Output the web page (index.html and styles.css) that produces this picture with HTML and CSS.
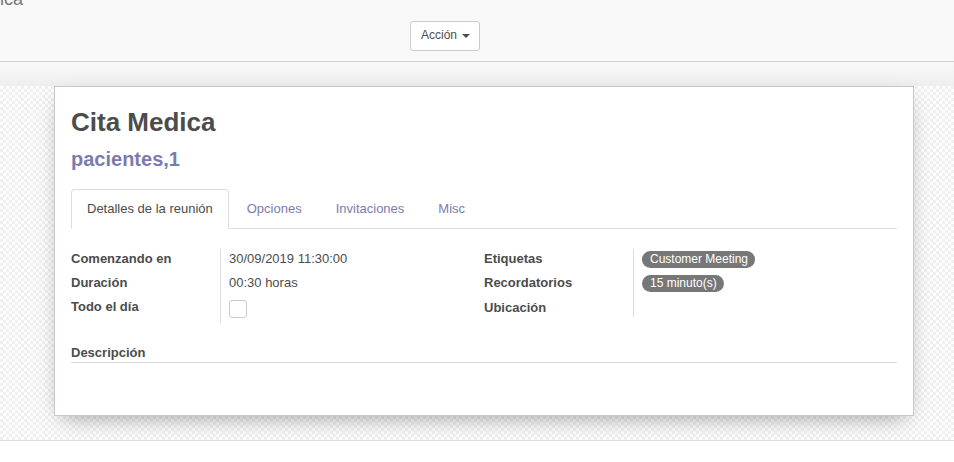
FILE: index.html
```html
<!DOCTYPE html>
<html lang="es">
<head>
<meta charset="utf-8">
<title>Cita Medica</title>
<link rel="stylesheet" href="styles.css">
</head>
<body>
<div class="cp">
  <div class="breadcrumb">Cita Medica</div>
  <div class="cp-row">
    <button class="btn" type="button">Acción <span class="caret"></span></button>
  </div>
</div>
<div class="sheet-bg">
  <div class="sheet">
    <h1 class="title">Cita Medica</h1>
    <h2 class="subtitle">pacientes,1</h2>
    <ul class="tabs">
      <li class="tab active">Detalles de la reunión</li>
      <li class="tab">Opciones</li>
      <li class="tab">Invitaciones</li>
      <li class="tab">Misc</li>
    </ul>
    <div class="groups">
      <div class="group">
        <div class="lbl">Comenzando en</div><div class="val">30/09/2019 11:30:00</div>
        <div class="lbl">Duración</div><div class="val">00:30 horas</div>
        <div class="lbl last">Todo el día</div><div class="val last"><span class="checkbox"></span></div>
      </div>
      <div class="group">
        <div class="lbl">Etiquetas</div><div class="val tags"><span class="badge">Customer Meeting</span></div>
        <div class="lbl">Recordatorios</div><div class="val tags"><span class="badge">15 minuto(s)</span></div>
        <div class="lbl last loc">Ubicación</div><div class="val last"></div>
      </div>
    </div>
    <div class="desc-label">Descripción</div>
    <div class="desc-body"></div>
  </div>
</div>
<div class="chatter"></div>
</body>
</html>
```
FILE: styles.css
```css
* { box-sizing: border-box; }
html, body { margin: 0; padding: 0; }
body {
  font-family: "Liberation Sans", Arial, sans-serif;
  font-size: 13px;
  color: #4c4c4c;
  background: #fff;
  overflow: hidden;
  height: 462px;
}

.cp {
  display: flow-root;
  height: 62px;
  background: #f9f9f9;
  border-bottom: 1px solid #cfcfcf;
}
.breadcrumb {
  font-size: 18px;
  line-height: 20px;
  color: #777;
  margin: -11px 0 0 -72px;
  white-space: nowrap;
}
.cp-row {
  display: flex;
  padding-left: 410px;
  margin-top: 12px;
}
.btn {
  font-family: "Liberation Sans", Arial, sans-serif;
  font-size: 12px;
  line-height: 16px;
  color: #4c4c4c;
  background: #fff;
  border: 1px solid #ccc;
  border-radius: 3px;
  height: 30px;
  width: 70px;
  padding: 5px 10px 7px;
  display: flex;
  align-items: center;
  gap: 5px;
  cursor: pointer;
}
.caret {
  display: inline-block;
  width: 0;
  height: 0;
  border-top: 4px solid #4c4c4c;
  border-left: 4px solid transparent;
  border-right: 4px solid transparent;
  margin-top: 2px;
}

.sheet-bg {
  padding: 24px 40px 24px 54px;
  background:
    linear-gradient(#f9f9f9, #eeeeee) 0 0 / 100% 24px no-repeat,
    repeating-conic-gradient(#f0f0f0 0 25%, #fdfdfd 0 50%) 0 0 / 6px 6px;
}
.sheet {
  width: 860px;
  background: #fff;
  border: 1px solid #c9c8d2;
  box-shadow: 0 8px 22px -8px rgba(0,0,0,0.4);
  padding: 20px 16px 16px;
}
.title {
  margin: 0;
  font-size: 26px;
  line-height: 30px;
  font-weight: bold;
  color: #4c4c4c;
}
.subtitle {
  margin: 10px 0 0;
  font-size: 20px;
  line-height: 24px;
  font-weight: bold;
  color: #7c7bad;
}
.tabs {
  list-style: none;
  margin: 18px 0 0;
  padding: 0;
  display: flex;
  border-bottom: 1px solid #ddd;
}
.tab {
  margin: 0 2px -1px 0;
  padding: 10px 15px;
  line-height: 18px;
  border: 1px solid transparent;
  border-radius: 4px 4px 0 0;
  color: #7c7bad;
  cursor: pointer;
}
.tab.active {
  color: #4c4c4c;
  background: #fff;
  border-color: #ddd #ddd transparent;
}

.groups {
  display: grid;
  grid-template-columns: 1fr 1fr;
  margin-top: 20px;
}
.group {
  display: grid;
  grid-template-columns: 150px 1fr;
  align-content: start;
}
.lbl {
  font-weight: bold;
  line-height: 19px;
  padding-bottom: 5px;
  border-right: 1px solid #ddd;
}
.val {
  line-height: 19px;
  padding: 0 0 5px 8px;
}
.lbl.last, .val.last { padding-bottom: 0; }
.tags {
  display: flex;
  align-items: flex-start;
  padding-top: 2px;
  padding-bottom: 3px;
}
.badge {
  display: inline-block;
  background: #777;
  color: #fff;
  font-size: 12px;
  line-height: 13px;
  padding: 2px 7px 2px 8px;
  border-radius: 10px;
}
.checkbox {
  display: block;
  width: 18px;
  height: 18px;
  border: 1px solid #ccc;
  border-radius: 3px;
  margin: 3px 0 5px;
}
.loc { padding-top: 1px; line-height: 19px; }

.desc-label {
  margin-top: 20px;
  font-weight: bold;
  line-height: 19px;
  border-bottom: 1px solid #d9d9d9;
}
.desc-body {
  height: 36px;
}

.chatter {
  border-top: 1px solid #dcdcdc;
  height: 40px;
  background: #fff;
}
```
